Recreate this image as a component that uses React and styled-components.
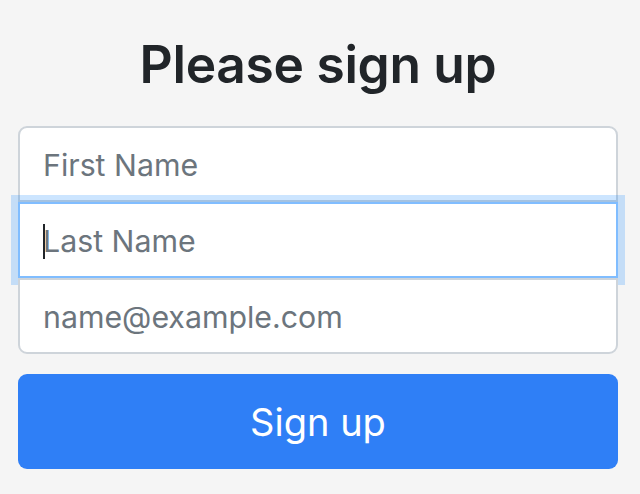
import React from 'react';
import styled, { createGlobalStyle, css } from 'styled-components';

const GlobalStyle = createGlobalStyle`
  html, body {
    margin: 0;
    padding: 0;
    background: #f5f5f5;
  }
  body {
    font-family: Inter, "Noto Sans", "Liberation Sans", sans-serif;
    color: #212529;
  }
`;

const FormSignin = styled.form`
  width: 600px;
  margin: 0 0 0 18px;
  padding-top: 30px;
  display: flex;
  flex-direction: column;
`;

const Heading = styled.h1`
  margin: 0 0 28px;
  font-size: 51.5px;
  font-weight: 600;
  line-height: 68px;
  text-align: center;
  letter-spacing: -0.3px;
  color: #212529;
`;

const Field = styled.div`
  position: relative;
  z-index: ${(p) => (p.$focused ? 1 : p.$last ? 2 : 0)};
`;

const Input = styled.input`
  box-sizing: border-box;
  display: block;
  width: 100%;
  height: 76px;
  padding: 2px 23px 0;
  font-family: inherit;
  font-size: 30.3px;
  color: #495057;
  background: #fff;
  border: 2px solid #ced4da;
  border-radius: ${(p) =>
    p.$first ? '9px 9px 0 0' : p.$last ? '0 0 9px 9px' : '0'};
  outline: none;
  caret-color: transparent;

  &::placeholder {
    color: #6c757d;
    opacity: 1;
  }

  ${(p) =>
    p.$focused &&
    css`
      border-color: #80bdff;
      box-shadow: 0 0 0 7px rgba(0, 123, 255, 0.2);
    `}
`;

const Caret = styled.span`
  position: absolute;
  left: 25px;
  top: 22px;
  width: 2px;
  height: 35px;
  background: #212529;
`;

const SubmitButton = styled.button`
  margin-top: 20px;
  height: 95px;
  border: none;
  border-radius: 9px;
  background: #2f7ff6;
  color: #fff;
  font-family: inherit;
  font-size: 38px;
  font-weight: 400;
  cursor: pointer;
`;

export default function App() {
  return (
    <>
      <GlobalStyle />
      <FormSignin onSubmit={(e) => e.preventDefault()}>
        <Heading>Please sign up</Heading>
        <Field $first>
          <Input $first type="text" placeholder="First Name" />
        </Field>
        <Field $focused>
          <Input $focused type="text" placeholder="Last Name" />
          <Caret />
        </Field>
        <Field $last>
          <Input $last type="email" placeholder="name@example.com" />
        </Field>
        <SubmitButton type="submit">Sign up</SubmitButton>
      </FormSignin>
    </>
  );
}
